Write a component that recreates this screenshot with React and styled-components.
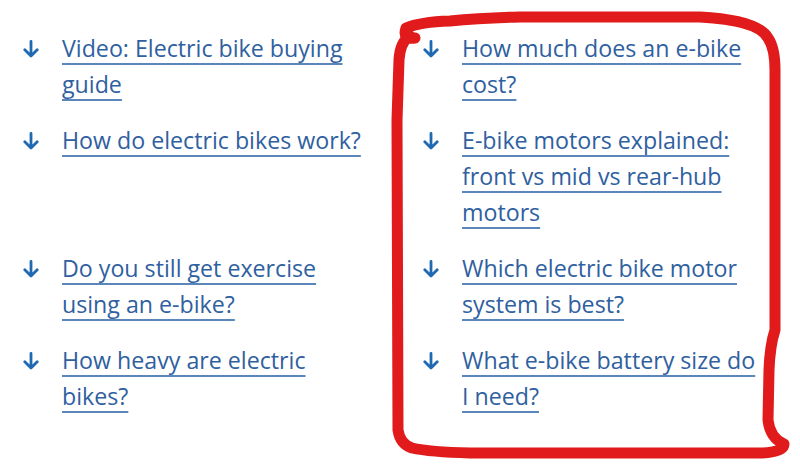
import React from "react";
import styled, { createGlobalStyle } from "styled-components";

const GlobalStyle = createGlobalStyle`
  html, body {
    margin: 0;
    padding: 0;
    background: #fff;
  }
  body {
    font-family: "Open Sans", "Noto Sans", sans-serif;
  }
`;

const links = [
  { id: 1, text: "Video: Electric bike buying guide" },
  { id: 2, text: "How much does an e-bike cost?" },
  { id: 3, text: "How do electric bikes work?" },
  { id: 4, text: "E-bike motors explained: front vs mid vs rear-hub motors" },
  { id: 5, text: "Do you still get exercise using an e-bike?" },
  { id: 6, text: "Which electric bike motor system is best?" },
  { id: 7, text: "How heavy are electric bikes?" },
  { id: 8, text: "What e-bike battery size do I need?" },
];

function ArrowDown() {
  return (
    <svg width="16" height="18" viewBox="0 0 16 18" fill="none">
      <path
        d="M8 1.5v14.5M1.8 9.8l6.2 6.2 6.2-6.2"
        stroke="#1f69b3"
        strokeWidth="2.8"
        strokeLinecap="round"
        strokeLinejoin="round"
      />
    </svg>
  );
}

function Scribble() {
  return (
    <Overlay width="800" height="474" viewBox="0 0 800 474">
      <path
        d="M415 38 Q402 40 406 28 Q420 22 450 21 Q480 18 520 17 L700 17 Q758 20 768 38 Q775 48 775 70 L775 330 Q770 345 769 370 L768 420 Q770 438 784 444 Q784 452 762 453 L470 453 Q430 452 412 448 Q400 444 398 430 L397 120 L399 60 Q400 42 410 36"
        stroke="#e11b1b"
        strokeWidth="11"
        fill="none"
        strokeLinecap="round"
        strokeLinejoin="round"
      />
    </Overlay>
  );
}

function App() {
  return (
    <Page>
      <GlobalStyle />
      <List>
        {links.map(link => (
          <Item key={link.id}>
            <Icon>
              <ArrowDown />
            </Icon>
            <Link href={"#q" + link.id}>{link.text}</Link>
          </Item>
        ))}
      </List>
      <Scribble />
    </Page>
  );
}

const Page = styled.div`
  position: relative;
  width: 800px;
  height: 474px;
  overflow: hidden;
  background: #fff;
`;

const List = styled.div`
  display: grid;
  grid-template-columns: 400px 400px;
  row-gap: 20px;
  padding-top: 30px;
`;

const Item = styled.div`
  display: flex;
  align-items: flex-start;
  padding-left: 23px;
`;

const Icon = styled.span`
  display: flex;
  align-items: center;
  height: 38px;
  width: 39px;
  flex-shrink: 0;
`;

const Link = styled.a`
  max-width: 301px;
  font-size: 23.2px;
  line-height: 36px;
  color: #2f60a0;
  text-decoration: underline;
  text-decoration-color: #5a86b9;
  text-decoration-thickness: 2px;
  text-underline-offset: 6px;
`;

const Overlay = styled.svg`
  position: absolute;
  top: 0;
  left: 0;
  pointer-events: none;
`;

export default App;
